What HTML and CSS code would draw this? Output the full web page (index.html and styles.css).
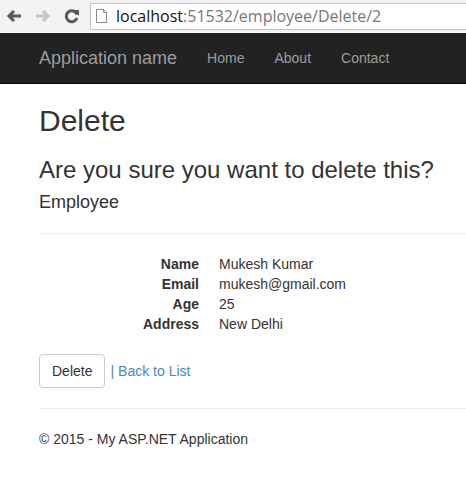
FILE: index.html
```html
<!DOCTYPE html>
<html lang="en">
<head>
    <meta charset="UTF-8">
    <meta name="viewport" content="width=device-width, initial-scale=1.0">
    <title>Delete - My ASP.NET Application</title>
    <link rel="stylesheet" href="styles.css">
</head>

<body>

    <!-- Barra do navegador -->
    <div class="barra-navegador">
        <span class="btn-nav">
            <svg width="16" height="14" viewBox="0 0 16 14"><path d="M15 7H3M8 2L3 7l5 5" fill="none" stroke="#5a5a5a" stroke-width="3"/></svg>
        </span>
        <span class="btn-nav">
            <svg width="16" height="14" viewBox="0 0 16 14"><path d="M1 7h12M8 2l5 5-5 5" fill="none" stroke="#c4c4c4" stroke-width="3"/></svg>
        </span>
        <span class="btn-nav btn-recarregar">
            <svg width="16" height="16" viewBox="0 0 16 16"><path d="M13 6.5A5.5 5.5 0 1 0 13 10" fill="none" stroke="#5a5a5a" stroke-width="3"/><path d="M9 2h6v6z" fill="#5a5a5a"/></svg>
        </span>
        <div class="endereco">
            <svg class="icone-pagina" width="11" height="14" viewBox="0 0 11 14"><path d="M.5.5h7l3 3v10H.5z" fill="#fff" stroke="#8a8a8a"/><path d="M7.5.5v3h3" fill="none" stroke="#8a8a8a"/></svg>
            <span class="host">localhost</span><span class="caminho">:51532/employee/Delete/2</span>
        </div>
    </div>

    <div class="navbar">
        <a class="navbar-brand" href="#">Application name</a>
        <ul class="nav">
            <li><a href="#">Home</a></li>
            <li><a href="#">About</a></li>
            <li><a href="#">Contact</a></li>
        </ul>
    </div>

    <div class="body-content">
        <h2>Delete</h2>

        <h3>Are you sure you want to delete this?</h3>
        <div>
            <h4>Employee</h4>
            <hr>
            <dl class="dl-horizontal">
                <dt>Name</dt>
                <dd>Mukesh Kumar</dd>
                <dt>Email</dt>
                <dd>mukesh@gmail.com</dd>
                <dt>Age</dt>
                <dd>25</dd>
                <dt>Address</dt>
                <dd>New Delhi</dd>
            </dl>

            <form class="form-acoes">
                <input type="submit" value="Delete" class="btn btn-default">
                <span class="separador">|</span>
                <a href="#">Back to List</a>
            </form>
        </div>

        <hr>
        <footer>
            <p>&copy; 2015 - My ASP.NET Application</p>
        </footer>
    </div>

</body>
</html>
```

FILE: styles.css
```css
* {
    margin: 0;
    padding: 0;
    box-sizing: border-box;
}

body {
    font-family: "Liberation Sans", Arial, sans-serif;
    font-size: 14px;
    line-height: 1.428571429;
    color: #333;
    background-color: #fff;
}

a {
    color: #428bca;
    text-decoration: none;
}

/* Barra do navegador */
.barra-navegador {
    height: 33px;
    background-color: #f2f2f2;
    border-bottom: 1px solid #fafafa;
    display: flex;
    align-items: center;
    padding-left: 6px;
}

.btn-nav {
    width: 29px;
    display: flex;
    align-items: center;
}

.btn-recarregar {
    width: 22px;
}

.endereco {
    flex: 1;
    height: 27px;
    margin-left: 4px;
    background-color: #fff;
    border: 1px solid #c2c2c2;
    border-right: none;
    border-radius: 2px 0 0 2px;
    display: flex;
    align-items: center;
    padding-left: 5px;
    font-family: "Open Sans", Arial, sans-serif;
    font-size: 16px;
}

.icone-pagina {
    margin-right: 9px;
}

.host {
    color: #111;
}

.caminho {
    color: #777;
}

/* Barra de navegação */
.navbar {
    height: 51px;
    background-color: #222;
    border-bottom: 1px solid #080808;
    display: flex;
    align-items: center;
    padding-left: 39px;
}

.navbar-brand {
    font-size: 18px;
    line-height: 20px;
    color: #9d9d9d;
    padding-right: 15px;
}

.nav {
    list-style: none;
    display: flex;
}

.nav li a {
    display: block;
    padding: 15px;
    line-height: 20px;
    color: #9d9d9d;
}

/* Conteúdo */
.body-content {
    padding-left: 39px;
}

h2, h3, h4 {
    font-weight: 500;
    line-height: 1.1;
}

h2 {
    font-size: 30px;
    margin-top: 20px;
    margin-bottom: 10px;
}

h3 {
    font-size: 24px;
    margin-top: 20px;
    margin-bottom: 10px;
}

h4 {
    font-size: 18px;
    margin-top: 10px;
    margin-bottom: 10px;
}

hr {
    margin-top: 20px;
    margin-bottom: 20px;
    border: 0;
    border-top: 1px solid #eee;
}

.dl-horizontal {
    margin-bottom: 20px;
    display: grid;
    grid-template-columns: 160px auto;
    column-gap: 20px;
}

.dl-horizontal dt {
    font-weight: bold;
    text-align: right;
}

.form-acoes {
    display: flex;
    align-items: center;
}

.btn {
    font-family: inherit;
    font-size: 14px;
    line-height: 1.428571429;
    padding: 6px 12px;
    border-radius: 4px;
    cursor: pointer;
}

.btn-default {
    color: #333;
    background-color: #fff;
    border: 1px solid #ccc;
}

.separador {
    color: #5b86ad;
    margin: 0 4px 0 5px;
}

footer p {
    margin-bottom: 10px;
}
```
